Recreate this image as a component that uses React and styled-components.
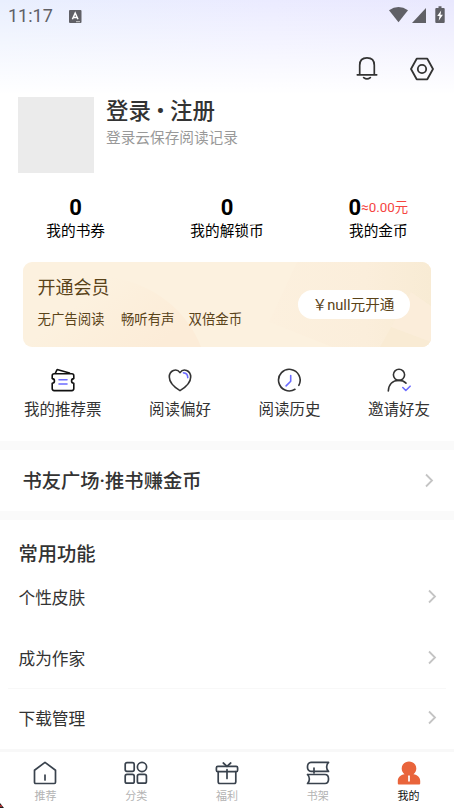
import styled, { createGlobalStyle } from "styled-components";

const GlobalStyle = createGlobalStyle`
    * {
        box-sizing: border-box;
    }

    body {
        margin: 0;
        background: #fff;
        color: #333;
        font-family: Roboto, "Noto Sans CJK SC", sans-serif;
    }

    svg {
        display: block;
        flex: none;
    }
`;

const Page = styled.div`
    position: relative;
    display: flex;
    flex-direction: column;
    width: 454px;
    height: 808px;
    overflow: hidden;
    background: #fff;
`;

const Top = styled.header`
    height: 97px;
    background: linear-gradient(to bottom, rgba(255, 255, 255, 0), #fff 97%),
        linear-gradient(to right, #e9effe, #ebebff 60%, #e9e8fe);
`;

const StatusBar = styled.div`
    display: flex;
    align-items: center;
    height: 32px;
    padding: 0 8px;
    color: #606066;
`;

const Clock = styled.span`
    width: 61px;
    font-size: 18px;
    line-height: 20px;
    letter-spacing: 0;
`;

const StatusIcons = styled.div`
    margin-left: auto;
    margin-right: -8px;
`;

const Toolbar = styled.div`
    display: flex;
    justify-content: flex-end;
    align-items: center;
    gap: 31px;
    height: 74px;
    padding-right: 20.5px;
`;

const Profile = styled.section`
    display: flex;
    gap: 12px;
    height: 99px;
    padding-left: 18px;
`;

const Avatar = styled.div`
    width: 76px;
    height: 75.5px;
    background: #ebebeb;
`;

const LoginTitle = styled.h1`
    margin: 0;
    font-size: 22.5px;
    font-weight: 500;
    line-height: 28px;
    white-space: pre;
`;

const LoginHint = styled.p`
    margin: 0;
    color: #999;
    font-size: 14.67px;
    line-height: 26px;
`;

const Stats = styled.section`
    display: flex;
    height: 66px;
`;

const Stat = styled.div`
    position: relative;
    flex: 1;
    text-align: center;
    color: #000;

    & + &::before {
        position: absolute;
        left: -1px;
        top: 6px;
        width: 1px;
        height: 30px;
        background: ${(p) => p.$line};
        content: "";
    }
`;

const StatValue = styled.div`
    display: flex;
    justify-content: center;
    height: 23px;
    font-size: 22px;
    font-weight: 700;
    line-height: 23px;
`;

const Approx = styled.span`
    color: #f5453f;
    font-size: 13.4px;
    font-weight: 400;
    line-height: 23px;
`;

const StatLabel = styled.div`
    font-size: 14.67px;
    line-height: 25px;
`;

const Vip = styled.section`
    display: flex;
    justify-content: space-between;
    align-items: center;
    position: relative;
    height: 85px;
    margin: 0 23px;
    padding: 0 21.5px 0 14.5px;
    border-radius: 9px;
    overflow: hidden;
    background: #fcf1df;
    color: #5a4319;
`;

const VipArt = styled.svg`
    position: absolute;
    inset: 0;
`;

const VipText = styled.div`
    position: relative;
    align-self: flex-start;
`;

const VipTitle = styled.h2`
    margin: 0;
    padding-top: 12px;
    font-size: 18px;
    font-weight: 400;
    line-height: 28px;
`;

const Perks = styled.div`
    display: flex;
    gap: 14px;
    padding-top: 6px;
    font-size: 13.4px;
    line-height: 24px;

    span:first-child {
        margin-right: 2.5px;
    }
`;

const VipButton = styled.button`
    position: relative;
    width: 112px;
    height: 29px;
    padding: 0;
    border: 0;
    border-radius: 15px;
    background: #fff;
    color: #5a4319;
    font: 14.67px/28px Roboto, "Noto Sans CJK SC", sans-serif;
`;

const Shortcuts = styled.nav`
    display: flex;
    justify-content: space-between;
    height: 94px;
    padding: 21px 24px 0;
`;

const Shortcut = styled.div`
    display: flex;
    flex-direction: column;
    align-items: center;
    gap: 5px;
    font-size: 15.5px;
    line-height: 26px;
`;

const Band = styled.div`
    flex: none;
    height: 9px;
    background: #fafafa;
`;

const Row = styled.div`
    display: flex;
    align-items: center;
    justify-content: space-between;
    height: ${(p) => p.$h}px;
    padding: ${(p) => p.$pad};
    font-size: 16.7px;
`;

const Heading = styled.h2`
    margin: 0;
    padding-top: 2px;
    font-size: 19.3px;
    font-weight: 500;
    line-height: 28px;
`;

const Features = styled.section`
    flex: 1;
    padding-top: 19px;
`;

const Divider = styled.div`
    height: 1px;
    margin: 0 8px;
    background: #f8f8f8;
`;

const TabBar = styled.nav`
    display: flex;
    flex: none;
    height: 59px;
    border-top: 3px solid #f8f8f8;
`;

const Tab = styled.div`
    display: flex;
    flex: 1;
    flex-direction: column;
    align-items: center;
    gap: 4px;
    padding-top: 9px;
    color: ${(p) => (p.$active ? "#111" : "#b3b3b3")};
    font-size: 11px;
    line-height: 16px;
`;

const Corner = styled.svg`
    position: absolute;
    left: 0;
    bottom: 0;
`;

function Icon({ children, size = 24, color = "#333", width = 1.6 }) {
    return (
        <svg
            width={size}
            height={size}
            viewBox="0 0 24 24"
            fill="none"
            stroke={color}
            strokeWidth={width}
            strokeLinecap="round"
            strokeLinejoin="round"
        >
            {children}
        </svg>
    );
}

function Chevron() {
    return (
        <svg width="10" height="16" fill="none" stroke="#c4c4c4" strokeWidth="1.8">
            <path d="M2 1.5l6 6-6 6" />
        </svg>
    );
}

const tabs = [
    {
        name: "推荐",
        icon: (
            <>
                <path d="M1.5 9.2L12 1.4l10.5 7.8v12.1q0 1.2-1.2 1.2H2.7q-1.2 0-1.2-1.2z" />
                <path d="M12 14v5" />
            </>
        ),
    },
    {
        name: "分类",
        icon: (
            <>
                <rect x="1.2" y="1.6" width="9" height="8.8" rx="1.8" />
                <circle cx="18" cy="6" r="4.6" />
                <rect x="1.2" y="13.4" width="9" height="8.8" rx="1.8" />
                <rect x="13.4" y="13.4" width="9" height="8.8" rx="1.8" />
            </>
        ),
    },
    {
        name: "福利",
        icon: (
            <>
                <rect x="1.4" y="5.4" width="21.2" height="5.2" rx="1.4" />
                <path d="M3.2 10.6v10.2q0 1.7 1.7 1.7h14.2q1.7 0 1.7-1.7V10.6M12 8.5v9M8.3 2l3.7 3.4L15.7 2" />
            </>
        ),
    },
    {
        name: "书架",
        icon: (
            <>
                <path d="M22.5 1.4H5C.3 1.4.3 10.4 5 10.4h17.5M22.5 1.4c-2.5 2.5-2.5 6.5 0 9M8 7v5" />
                <path d="M1.5 13.5H19c4.7 0 4.7 9 0 9H1.5c2.5-2.5 2.5-6.5 0-9" />
            </>
        ),
    },
    {
        name: "我的",
        active: true,
        icon: (
            <>
                <path
                    fill="#e9643b"
                    stroke="none"
                    d="M12 .5c4.2 0 7.3 3 7.3 7 0 2.4-1.1 4.4-2.8 5.7 4 .8 6.7 3 6.7 6.8v2.5q0 1-1 1H1.8q-1 0-1-1V20c0-3.8 2.7-6 6.7-6.8-1.7-1.3-2.8-3.3-2.8-5.7 0-4 3.1-7 7.3-7z"
                />
                <path stroke="#fff" d="M12 15.2v4.6" />
            </>
        ),
    },
];

export default function App() {
    return (
        <Page>
            <GlobalStyle />
            <Top>
                <StatusBar>
                    <Clock>11:17</Clock>
                    <svg width="13" height="13">
                        <rect width="12.5" height="13" rx="1" fill="#606066" />
                        <path d="M3.4 9.3L6.2 3l2.8 6.3M4.4 7.4H8" fill="none" stroke="#fff" strokeWidth="1.5" />
                        <path d="M7 11.7h4" stroke="#ccc" />
                    </svg>
                    <StatusIcons>
                        <svg width="70" height="32" fill="#606066">
                            <path d="M5 10.3Q14.5 3.7 24 10.3L14.5 22.3z" />
                            <path d="M42 8v15H28z" />
                            <path d="M54.5 6.3h3v1.8h2.2q1 0 1 1V22q0 1-1 1h-7.4q-1 0-1-1V9.1q0-1 1-1h2.2z" />
                            <path d="M57.2 10.5l-4 5.6h2.3l-.8 4.7 4.2-6h-2.4z" fill="#fff" />
                        </svg>
                    </StatusIcons>
                </StatusBar>
                <Toolbar>
                    <Icon width={1.7}>
                        <path d="M2.3 17.8h19.4M4.7 17.5V8.2C4.7 3.4 7.7.9 12 .9s7.3 2.5 7.3 7.3v9.300M8.7 20.6q3.3 2.6 6.600 0" />
                    </Icon>
                    <Icon width={1.8}>
                        <path d="M6.7 1.7h10.6L23 12l-5.7 10.3H6.7L1 12z" />
                        <circle cx="12" cy="12" r="4.2" />
                    </Icon>
                </Toolbar>
            </Top>

            <Profile>
                <Avatar />
                <div>
                    <LoginTitle>登录 • 注册</LoginTitle>
                    <LoginHint>登录云保存阅读记录</LoginHint>
                </div>
            </Profile>

            <Stats>
                <Stat>
                    <StatValue>0</StatValue>
                    <StatLabel>我的书券</StatLabel>
                </Stat>
                <Stat $line="#e5e5e5">
                    <StatValue>0</StatValue>
                    <StatLabel>我的解锁币</StatLabel>
                </Stat>
                <Stat $line="#ccc">
                    <StatValue>
                        0<Approx>≈0.00元</Approx>
                    </StatValue>
                    <StatLabel>我的金币</StatLabel>
                </Stat>
            </Stats>

            <Vip>
                <VipArt width="408" height="85">
                    <defs>
                        <linearGradient id="arc" x1="0" x2="1" y1="0" y2="0.5">
                            <stop offset="0.4" stopColor="#fcecd6" stopOpacity="0" />
                            <stop offset="1" stopColor="#fcecd8" />
                        </linearGradient>
                        <linearGradient id="fold" x1="0" x2="1">
                            <stop offset="0" stopColor="#fcf0de" />
                            <stop offset="0.6" stopColor="#fbeedb" />
                            <stop offset="1" stopColor="#f8ebd4" />
                        </linearGradient>
                    </defs>
                    <path d="M0 85V35Q45 12 85 15C130 20 165 50 178 85z" fill="url(#arc)" />
                    <path d="M274 0h134v85H309L246 60z" fill="url(#fold)" />
                    <path d="M357 85l31-55 20 14v41z" fill="#f9ebd4" />
                    <path d="M368 65l20-35 20 14v36z" fill="#fbefdd" opacity=".6" />
                </VipArt>
                <VipText>
                    <VipTitle>开通会员</VipTitle>
                    <Perks>
                        <span>无广告阅读</span>
                        <span>畅听有声</span>
                        <span>双倍金币</span>
                    </Perks>
                </VipText>
                <VipButton>￥null元开通</VipButton>
            </Vip>

            <Shortcuts>
                <Shortcut>
                    <Icon color="#111">
                        <path d="M3.2 5.8h17.6q2 0 2 2v2.8c-3 .2-3 4.4 0 4.6v5.4q0 2-2 2H3.2q-2 0-2-2v-5.4c3-.2 3-4.4 0-4.6V7.8q0-2 2-2zM4.2 5.5l1.5-3.2q.4-.8 1.3-.6L18.5 5" />
                        <path d="M8 11.7h8M8 16h8" stroke="#6c6cff" />
                    </Icon>
                    我的推荐票
                </Shortcut>
                <Shortcut>
                    <Icon>
                        <path d="M12 22.6C8.5 20.5 1.3 15.5 1.3 9 1.3 2.2 8.6-.3 12 4.6 15.4-.3 22.7 2.2 22.7 9c0 6.5-7.2 11.5-10.7 13.6z" />
                        <path d="M15.5 4.9c2.7.1 4.2 1.9 4.3 4.7" stroke="#6c6cff" />
                    </Icon>
                    阅读偏好
                </Shortcut>
                <Shortcut>
                    <Icon>
                        <path d="M21.8 17.3A10.8 10.8 0 1 0 18 21.3" />
                        <path d="M13.7 7.5v5.8l-4.6 4.6" stroke="#6c6cff" />
                    </Icon>
                    阅读历史
                </Shortcut>
                <Shortcut>
                    <Icon>
                        <circle cx="12" cy="6.8" r="5.6" />
                        <path d="M1.3 23c.3-6.8 4.6-10.6 10.7-10.6 3 0 5.3 1 7 2.7" />
                        <path d="M15.8 19.5l3 3 4.3-4.3" stroke="#6c6cff" />
                    </Icon>
                    邀请好友
                </Shortcut>
            </Shortcuts>

            <Band />
            <Row $h={61} $pad="0 20.5px 0 22.5px">
                <Heading>书友广场·推书赚金币</Heading>
                <Chevron />
            </Row>
            <Band />

            <Features>
                <Row $h={28} $pad="2px 0 0 18.5px">
                    <Heading>常用功能</Heading>
                </Row>
                <Row $h={60} $pad="0 17px 0 18.5px">
                    个性皮肤
                    <Chevron />
                </Row>
                <Row $h={61} $pad="0 17px 0 18.5px">
                    成为作家
                    <Chevron />
                </Row>
                <Divider />
                <Row $h={58} $pad="0 17px 0 18.5px">
                    下载管理
                    <Chevron />
                </Row>
            </Features>

            <TabBar>
                {tabs.map((tab) => (
                    <Tab key={tab.name} $active={tab.active}>
                        <Icon color="#39424d" width={1.7}>
                            {tab.icon}
                        </Icon>
                        {tab.name}
                    </Tab>
                ))}
            </TabBar>
            <Corner width="4" height="5">
                <path d="M0 0l4 5H0z" fill="#222" />
                <path d="M0 2h2v2H0z" fill="#a33" />
            </Corner>
        </Page>
    );
}
